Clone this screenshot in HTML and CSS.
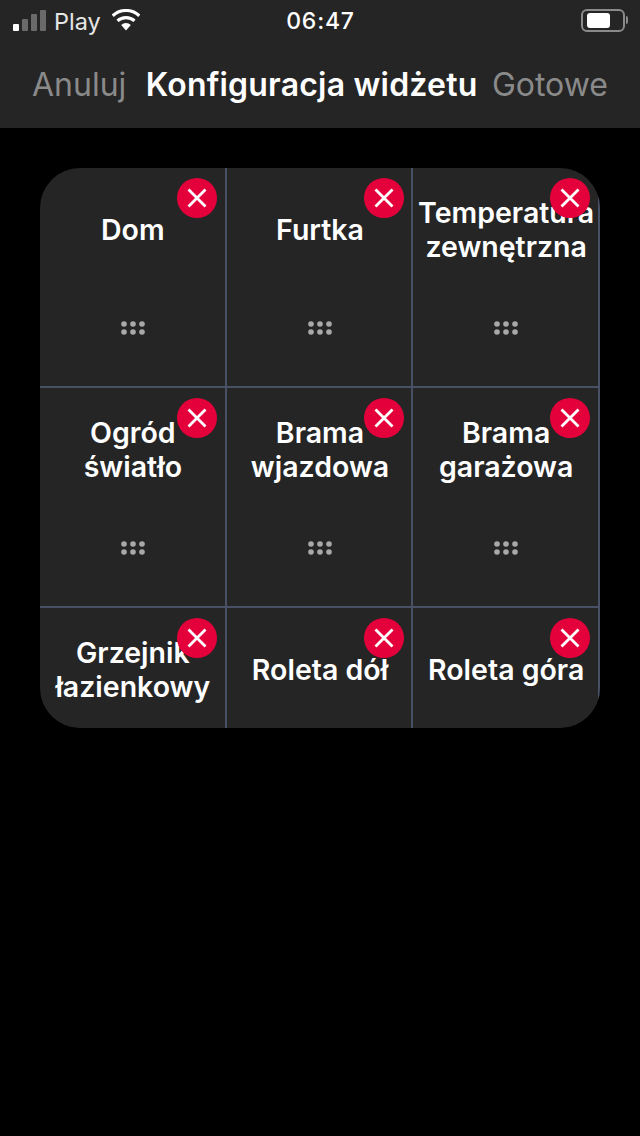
FILE: index.html
```html
<!DOCTYPE html>
<html lang="pl">
<head>
<meta charset="UTF-8">
<meta name="viewport" content="width=device-width, initial-scale=1.0">
<title>Konfiguracja widżetu</title>
<link rel="stylesheet" href="styles.css">
</head>
<body>
<svg class="defs">
  <symbol id="remove" viewBox="0 0 40 40">
    <circle cx="20" cy="20" r="20" fill="#e4003a"/>
    <path d="M11.5 11.5 L28.5 28.5 M28.5 11.5 L11.5 28.5" stroke="#fff" stroke-width="2.8" fill="none"/>
  </symbol>
  <symbol id="grip" viewBox="0 0 24 14">
    <circle cx="3" cy="3" r="2.8"/><circle cx="12" cy="3" r="2.8"/><circle cx="21" cy="3" r="2.8"/>
    <circle cx="3" cy="11" r="2.8"/><circle cx="12" cy="11" r="2.8"/><circle cx="21" cy="11" r="2.8"/>
  </symbol>
</svg>

<header class="top">
  <div class="status">
    <div class="status-left">
      <span class="signal"><i></i><i></i><i></i><i></i></span>
      <span class="carrier">Play</span>
      <svg class="wifi" viewBox="0 0 28 22">
        <path d="M14 21.5 L9.2 15.9 A7 7 0 0 1 18.8 15.9 Z" fill="#fff"/>
        <path d="M5.5 11.9 A12.5 12.5 0 0 1 22.5 11.9 M0.7 6.74 A19.5 19.5 0 0 1 27.3 6.74" stroke="#fff" stroke-width="3.2" fill="none"/>
      </svg>
    </div>
    <span class="time">06:47</span>
    <div class="status-right">
      <span class="battery"><i></i></span><span class="battery-cap"></span>
    </div>
  </div>
  <nav class="navbar">
    <span class="nav-btn">Anuluj</span>
    <span class="nav-title">Konfiguracja widżetu</span>
    <span class="nav-btn">Gotowe</span>
  </nav>
</header>

<main class="widget">
  <div class="cell">
    <svg class="remove"><use href="#remove"/></svg>
    <div class="name">Dom</div>
    <svg class="grip"><use href="#grip"/></svg>
  </div>
  <div class="cell">
    <svg class="remove"><use href="#remove"/></svg>
    <div class="name">Furtka</div>
    <svg class="grip"><use href="#grip"/></svg>
  </div>
  <div class="cell">
    <div class="name">Temperatura zewnętrzna</div>
    <svg class="remove"><use href="#remove"/></svg>
    <svg class="grip"><use href="#grip"/></svg>
  </div>
  <div class="cell">
    <div class="name">Ogród<br>światło</div>
    <svg class="remove"><use href="#remove"/></svg>
    <svg class="grip"><use href="#grip"/></svg>
  </div>
  <div class="cell">
    <div class="name">Brama<br>wjazdowa</div>
    <svg class="remove"><use href="#remove"/></svg>
    <svg class="grip"><use href="#grip"/></svg>
  </div>
  <div class="cell">
    <div class="name">Brama<br>garażowa</div>
    <svg class="remove"><use href="#remove"/></svg>
    <svg class="grip"><use href="#grip"/></svg>
  </div>
  <div class="cell">
    <div class="name">Grzejnik<br>łazienkowy</div>
    <svg class="remove"><use href="#remove"/></svg>
  </div>
  <div class="cell">
    <div class="name">Roleta dół</div>
    <svg class="remove"><use href="#remove"/></svg>
  </div>
  <div class="cell">
    <div class="name">Roleta góra</div>
    <svg class="remove"><use href="#remove"/></svg>
  </div>
</main>
</body>
</html>
```

FILE: styles.css
```css
body {
  margin: 0;
  background-color: #000;
  color: #fff;
  font-family: Inter, "Liberation Sans", sans-serif;
  height: 1136px;
  overflow: hidden;
}

.defs {
  display: none;
}

.top {
  background-color: #252525;
  height: 128px;
}

.status {
  display: grid;
  grid-template-columns: 1fr auto 1fr;
  align-items: center;
  height: 40px;
  padding: 0 12px 0 13px;
}

.status-left {
  display: flex;
  align-items: center;
  gap: 8px;
}

.signal {
  display: flex;
  align-items: flex-end;
  gap: 3px;
}

.signal i {
  width: 6px;
  background-color: #6a6a6a;
  border-radius: 1px;
}

.signal i:nth-child(1) { height: 7px; background-color: #fff; }
.signal i:nth-child(2) { height: 12px; }
.signal i:nth-child(3) { height: 17px; }
.signal i:nth-child(4) { height: 21px; }

.carrier {
  margin-top: 2px;
  font-size: 23.5px;
  color: #e6e6e6;
}

.wifi {
  width: 28px;
  height: 22px;
  margin-left: 3px;
}

.time {
  margin-top: 2px;
  font-size: 23px;
  font-weight: 500;
  letter-spacing: 0.8px;
}

.status-right {
  display: flex;
  justify-content: flex-end;
  align-items: center;
}

.battery {
  display: flex;
  align-items: center;
  box-sizing: border-box;
  width: 44px;
  height: 23px;
  padding: 2px 4px;
  border: 2px solid #8a8a8a;
  border-radius: 6px;
}

.battery i {
  width: 23px;
  height: 15px;
  background-color: #fff;
  border-radius: 3px;
}

.battery-cap {
  width: 2px;
  height: 8px;
  margin-left: 1px;
  background-color: #8a8a8a;
  border-radius: 0 2px 2px 0;
}

.navbar {
  display: flex;
  justify-content: space-between;
  align-items: center;
  height: 88px;
  padding: 0 32px;
}

.nav-btn {
  font-size: 32px;
  color: #8a8a8a;
}

.nav-title {
  margin-left: 5px;
  font-size: 32px;
  font-weight: 600;
  letter-spacing: 0.2px;
}

.widget {
  display: grid;
  grid-template-columns: repeat(3, 1fr);
  grid-auto-rows: 220px;
  width: 560px;
  height: 560px;
  margin: 40px 0 0 40px;
  background-color: #252525;
  border-radius: 40px;
  overflow: hidden;
}

.cell {
  position: relative;
  display: flex;
  flex-direction: column;
  align-items: center;
  box-sizing: border-box;
  padding: 28px 0 0 1px;
  border-right: 2px solid #475064;
  border-bottom: 2px solid #475064;
}

.cell:nth-child(3n+2) {
  padding-left: 2px;
}

.name {
  display: flex;
  align-items: center;
  justify-content: center;
  width: 100%;
  height: 68px;
  font-size: 28.5px;
  font-weight: 600;
  line-height: 34px;
  text-align: center;
  white-space: nowrap;
}

.cell:nth-child(3) .name {
  white-space: normal;
}

.remove {
  position: absolute;
  top: 10px;
  right: 8px;
  width: 40px;
  height: 40px;
}

.cell:nth-child(3n+2) .remove {
  right: 7px;
}

.grip {
  width: 24px;
  height: 14px;
  margin-top: 57px;
  fill: #a9a9a9;
}
```
